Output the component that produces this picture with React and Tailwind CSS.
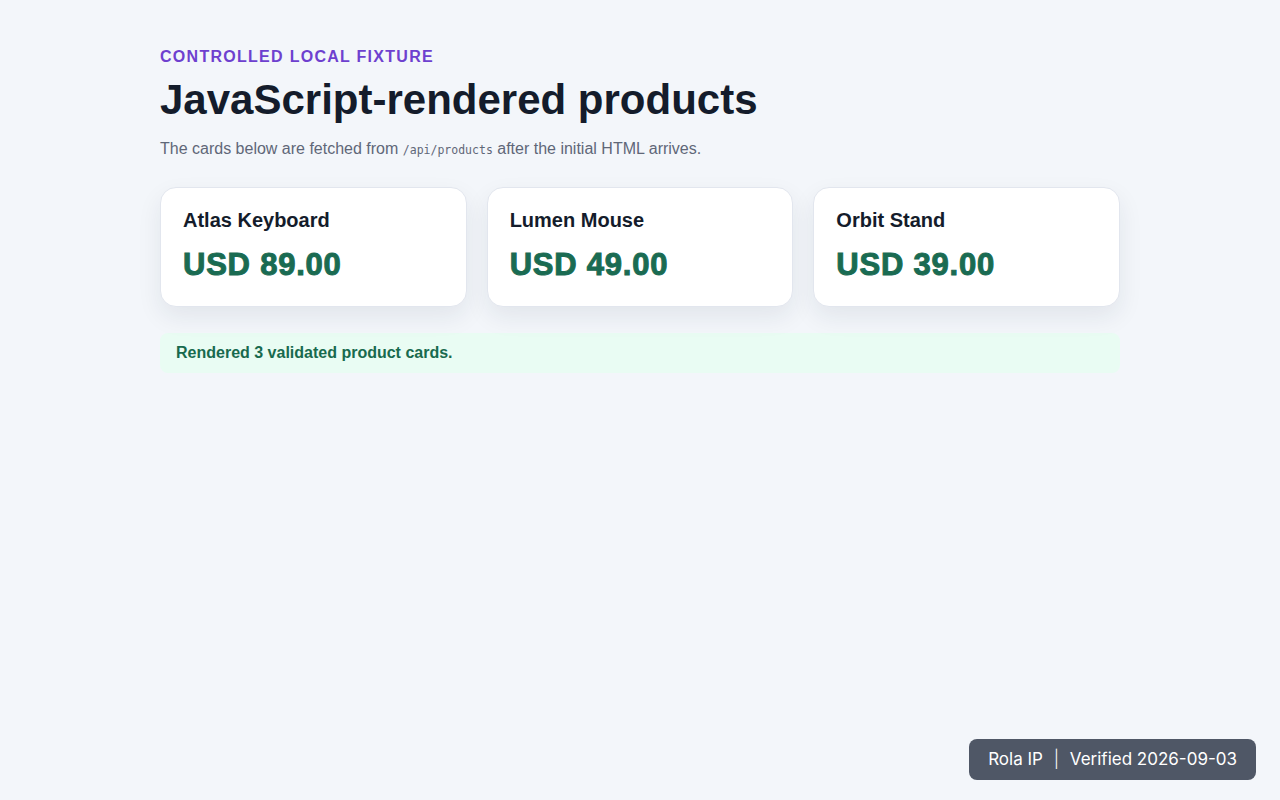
const products = [
    { name: "Atlas Keyboard", price: "USD 89.00" },
    { name: "Lumen Mouse", price: "USD 49.00" },
    { name: "Orbit Stand", price: "USD 39.00" },
];

const ProductCard = ({ name, price }) => (
    <div className="rounded-2xl border border-[#e2e6ee] bg-white px-[22px] pt-[19px] pb-[23px] shadow-[0_10px_24px_rgba(30,41,59,0.08)]">
        <h2 className="text-[20px] font-bold leading-[26px] text-[#141c2b]">{name}</h2>
        <p className="mt-[14px] text-[31px] font-black leading-[36px] tracking-[0.025em] text-[#1a6b52] [-webkit-text-stroke:1px_#1a6b52]">
            {price}
        </p>
    </div>
);

export default function App() {
    return (
        <div className="min-h-screen bg-[#f3f6fa] font-['Liberation_Sans',Arial,sans-serif]">
            <main className="mx-auto w-[960px] pt-[47px]">
                <p className="text-[16px] font-bold uppercase leading-5 tracking-[0.08em] text-[#6e40cf]">
                    Controlled local fixture
                </p>
                <h1 className="mt-[8px] text-[42px] font-bold leading-[50px] text-[#141c2b]">
                    JavaScript-rendered products
                </h1>
                <p className="mt-[12px] text-[16px] leading-6 text-[#5f6778]">
                    The cards below are fetched from{" "}
                    <code className="font-['DejaVu_Sans_Mono',monospace] text-[11.5px]">/api/products</code>{" "}
                    after the initial HTML arrives.
                </p>

                <div className="mt-[25px] grid grid-cols-3 gap-5">
                    {products.map((p) => (
                        <ProductCard key={p.name} {...p} />
                    ))}
                </div>

                <div className="mt-[26px] rounded-lg bg-[#e9fcf3] px-4 py-[10px]">
                    <p className="text-[16px] font-bold leading-5 text-[#186a4e]">
                        Rendered 3 validated product cards.
                    </p>
                </div>
            </main>

            <div className="fixed right-[24px] bottom-[20px] rounded-lg bg-[#4f5766] px-[19px] py-[9px] font-['Inter',sans-serif] text-[17px] leading-[23px] text-white">
                Rola IP <span className="mx-[6px] font-light">|</span> Verified 2026-09-03
            </div>
        </div>
    );
}
